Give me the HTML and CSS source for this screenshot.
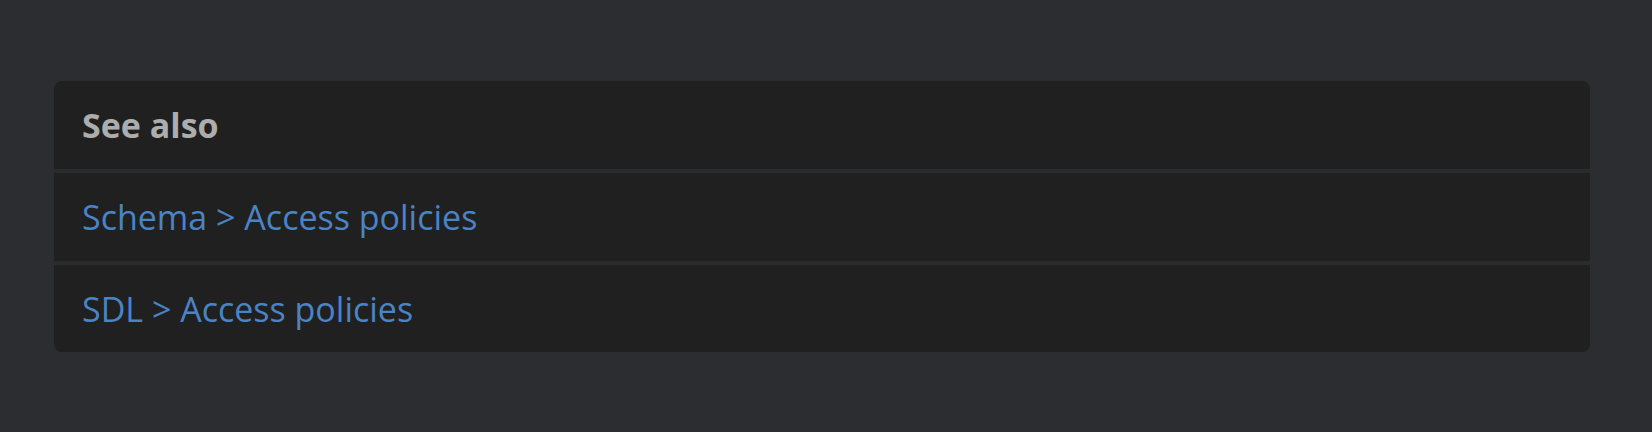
FILE: index.html
```html
<!DOCTYPE html>
<html lang="en">
<head>
<meta charset="utf-8">
<title>See also</title>
<link rel="stylesheet" href="styles.css">
</head>
<body>
<main class="page">
  <section class="card">
    <div class="row row-head">See also</div>
    <div class="row"><a class="link" href="#">Schema &gt; Access policies</a></div>
    <div class="row row-last"><a class="link" href="#">SDL &gt; Access policies</a></div>
  </section>
</main>
</body>
</html>
```
FILE: styles.css
```css
html, body {
  margin: 0;
  padding: 0;
  background: #2c2d30;
}
body {
  font-family: "Open Sans", "Noto Sans", sans-serif;
  height: 432px;
  overflow: hidden;
}
.page {
  padding: 81px 62px 0 54px;
}
.card {
  display: flex;
  flex-direction: column;
  gap: 4px;
  background: #2a2b2d;
  border-radius: 8px;
  overflow: hidden;
}
.row {
  height: 88px;
  display: flex;
  align-items: center;
  padding: 0 28px;
  background: #202020;
  font-size: 34px;
}
.row-last {
  height: 87px;
}
.row-head {
  font-weight: 700;
  color: #adadad;
}
.link {
  color: #4b84c4;
  text-decoration: none;
}
```
